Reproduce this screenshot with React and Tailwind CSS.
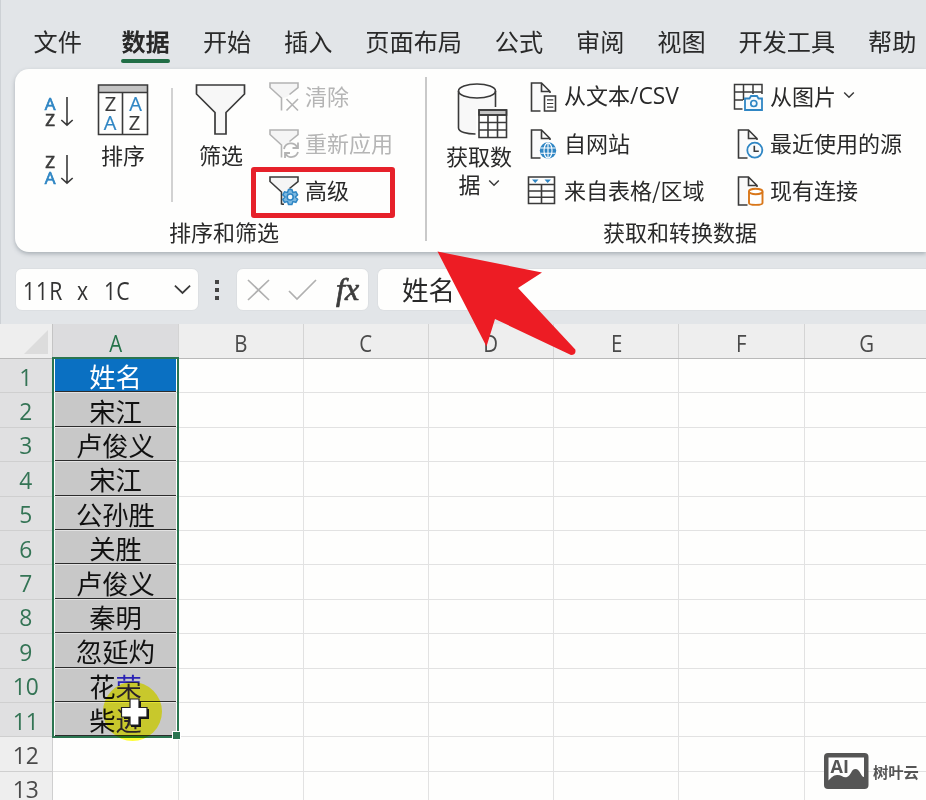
import React from 'react';

const INK = '#3a3a3a';
const BLUE = '#2f86c4';

const TABS = ['开始', '插入', '页面布局', '公式', '审阅', '视图', '开发工具', '帮助'];
const NAMES = ['姓名', '宋江', '卢俊义', '宋江', '公孙胜', '关胜', '卢俊义', '秦明', '忽延灼', '花荣', '柴进'];
const COLUMNS = ['A', 'B', 'C', 'D', 'E', 'F', 'G'];
const ROWS = Array.from({ length: 13 }, (_, i) => i + 1);

function Glyph({ x, y, size = 17, color = INK, width = 0.2, children }) {
  return (
    <text x={x} y={y} fontSize={size} fill={color} stroke={color} strokeWidth={width} textAnchor="middle" fontFamily="'Open Sans', sans-serif">
      {children}
    </text>
  );
}

function SortOrderIcon({ top, bottom }) {
  return (
    <svg className="block h-9 w-8 overflow-visible" viewBox="0 0 32 36" fill="none">
      <Glyph x="7" y="16" color={top === 'A' ? BLUE : INK} width={0.7}>{top}</Glyph>
      <Glyph x="7" y="32" color={bottom === 'A' ? BLUE : INK} width={0.7}>{bottom}</Glyph>
      <path d="M24 3V31M18.300 26L24 31.200L29.700 26" stroke={INK} strokeWidth="1.600" />
    </svg>
  );
}

function SortIcon() {
  return (
    <svg className="block h-[52px] w-[52px]" viewBox="0 0 52 52" fill="none">
      <rect x="1.500" y="1" width="49" height="7.500" fill="#c4c4c4" />
      <path d="M1.500 1H50.500V50.500H1.500ZM1.500 8.500H50.500M25.500 8.500V50.500" stroke={INK} strokeWidth="1.600" />
      <Glyph x="13.500" y="27" size={20}>Z</Glyph>
      <Glyph x="38.500" y="27" size={20} color={BLUE}>A</Glyph>
      <Glyph x="13" y="45.500" size={20} color={BLUE}>A</Glyph>
      <Glyph x="37.500" y="45.500" size={20}>Z</Glyph>
    </svg>
  );
}

function FilterIcon() {
  return (
    <svg className="block h-[52px] w-[52px]" viewBox="0 0 52 52" fill="none">
      <path d="M1.500 1H49.500V10L31 28.500V50H20V28.500L1.500 10Z" fill="#f7f7f7" stroke={INK} strokeWidth="1.700" />
    </svg>
  );
}

function SmallFunnel({ kind }) {
  const color = kind === 'advanced' ? INK : '#b3b3b3';
  return (
    <svg className="block h-8 w-8" viewBox="0 0 32 32" fill="none" stroke={color} strokeWidth="1.600">
      <path d="M1 2H29V6.500L18 16L12.500 17L1 6.500Z" fill="#f5f5f5" stroke="none" />
      <path d="M12.500 29.500V17L1 6.500V2H29V6.500L20.500 13.500" />
      {kind === 'clear' && <path d="M17.500 18L29 29.500M29 18L17.500 29.500" />}
      {kind === 'reapply' && (
        <path d="M15 21A7 7 0 0 1 28 19M29 14.500V20H23.500M29 24A7 7 0 0 1 16.500 26M16 30V25H21" strokeWidth="1.800" />
      )}
      {kind === 'advanced' && (
        <>
          <path d="M12.500 29.200H15" />
          <path d="M19.500 14.500h3.400l1 3 3-.7 1.700 3-2.200 2.200 2.200 2.300-1.700 3-3-.7-1 3h-3.400l-1-3-3 .7-1.700-3 2.200-2.300-2.200-2.200 1.700-3 3 .7z" fill="#7fb9e0" stroke={BLUE} strokeWidth="1.500" />
          <circle cx="21.200" cy="22" r="3" fill="#f4f9fd" stroke={BLUE} />
        </>
      )}
    </svg>
  );
}

function DatabaseIcon() {
  return (
    <svg className="ml-2 block h-[56px] w-[52px]" viewBox="0 0 52 56" fill="none" stroke={INK} strokeWidth="1.600">
      <path d="M1.500 8V45C1.500 49 11 51 19 51V27H38.500V8" fill="#f8f8f8" stroke="none" />
      <ellipse cx="20" cy="8" rx="18.500" ry="7" fill="#fdfdfd" />
      <path d="M38.500 8V24M1.500 8V45C1.500 49 10 51 18.500 51" />
      <rect x="22" y="27" width="27.500" height="5" fill="#c4c4c4" />
      <path d="M22 27H49.500V54.500H22ZM22 32H49.500M22 39.500H49.500M22 47H49.500M31 32V54.500M40.500 32V54.500" />
    </svg>
  );
}

function PageIcon({ kind }) {
  return (
    <svg className="block h-8 w-8" viewBox="0 0 32 32" fill="none" stroke={INK} strokeWidth="1.600">
      <path d="M5.500 2H15.500L23.500 10V13H14.500V29.500H5.500Z" fill="#fafafa" stroke="none" />
      <path d="M14.500 30H5.500V2H15.500L24 10.500V12M15.500 2V10.500H24" />
      {kind === 'text' && (
        <>
          <path d="M18.500 15H29.500V30H18.500Z" fill="#fff" />
          <path d="M21 18.800H27.300M21 22.500H27.300M21 26.200H27.300" strokeWidth="1.200" />
        </>
      )}
      {kind === 'web' && (
        <>
          <circle cx="22" cy="22.500" r="8.200" fill={BLUE} stroke="none" />
          <path d="M14.500 20H29.500M14.500 25.300H29.500M22 15V30" stroke="#fff" strokeWidth="1.100" />
          <ellipse cx="22" cy="22.500" rx="4" ry="7.600" stroke="#fff" strokeWidth="1.100" />
        </>
      )}
      {kind === 'recent' && (
        <>
          <circle cx="21.800" cy="22.200" r="7.500" fill="#f8fbfd" stroke={BLUE} strokeWidth="1.800" />
          <path d="M21.300 17.700V23.200H25.800" />
        </>
      )}
      {kind === 'connection' && (
        <g stroke="#d9771a" strokeWidth="1.900">
          <path d="M16 16.500V28C16 30.500 29.500 30.500 29.500 28V16.500" fill="#fff" />
          <ellipse cx="22.700" cy="16.500" rx="6.800" ry="2.800" fill="#fff" />
        </g>
      )}
    </svg>
  );
}

function TableRangeIcon() {
  return (
    <svg className="block h-8 w-8" viewBox="0 0 32 32" fill="none" stroke={INK} strokeWidth="1.600">
      <path d="M2.500 2H28.500V28.500H2.500ZM2.500 9.500H28.500M2.500 16H28.500M2.500 22.300H28.500M15.500 9.500V28.500" />
      <path d="M6 4.500H12.500L9.200 8ZM18.500 4.500H25L21.700 8Z" fill={BLUE} stroke="none" />
    </svg>
  );
}

function PictureTableIcon() {
  return (
    <svg className="block h-8 w-8" viewBox="0 0 32 32" fill="none" stroke={INK} strokeWidth="1.500">
      <path d="M9.500 28H1.500V3.500H29V13M1.500 11H29M1.500 19H10M10.500 3.500V19M20 3.500V13" />
      <path d="M12 17.500H16.500L18 15H24L25.500 17.500H29V29H12Z" fill="#f6fafd" stroke={BLUE} strokeWidth="1.800" />
      <circle cx="20.800" cy="22.500" r="3" stroke={BLUE} strokeWidth="1.700" />
    </svg>
  );
}

function Chevron({ className, weight = '1.500' }) {
  return (
    <svg className={className} viewBox="0 0 12 8" fill="none">
      <path d="M1.200 1.500L6 6.200L10.800 1.500" stroke={INK} strokeWidth={weight} />
    </svg>
  );
}

function Command({ icon, label, muted, gap = 'gap-1' }) {
  return (
    <div className={`flex h-[47px] items-center ${gap} ${muted ? 'text-[#b5b5b5]' : ''}`}>
      {icon}
      <span className="-mt-[3px]">{label}</span>
    </div>
  );
}

function TabBar() {
  return (
    <nav className="flex h-[69px] items-start pl-[33.500px] pt-[23px] text-[24.200px] leading-9 whitespace-nowrap">
      <span className="mr-[39.500px]">文件</span>
      <span className="mr-[32.500px] flex flex-col font-bold leading-9">
        数据
        <i className="h-1 w-[49px] rounded-full bg-[#216e46]" />
      </span>
      <div className="flex gap-[32.800px]">
        {TABS.map((tab) => <span key={tab}>{tab}</span>)}
      </div>
    </nav>
  );
}

function Ribbon() {
  return (
    <section className="ml-[15px] flex h-[183px] rounded-l-[14px] bg-[#fefefd] text-[22px] leading-7 whitespace-nowrap shadow-[0_2px_4px_rgba(100,110,120,0.45)]">
      <div className="flex w-[410px] shrink-0 flex-col">
        <div className="flex h-[145px]">
          <div className="flex w-[82px] flex-col gap-[22px] pl-7 pt-[25px]">
            <SortOrderIcon top="A" bottom="Z" />
            <SortOrderIcon top="Z" bottom="A" />
          </div>
          <div className="flex w-[52px] flex-col items-center gap-1 pt-[15px]">
            <SortIcon />
            <span>排序</span>
          </div>
          <div className="ml-[22px] mt-[19px] h-[114px] w-[2px] bg-[#d2d2d2]" />
          <div className="ml-[22px] flex w-[52px] flex-col items-center gap-1 pt-[15px]">
            <FilterIcon />
            <span>筛选</span>
          </div>
          <div className="ml-[22px] pt-1">
            <Command icon={<SmallFunnel kind="clear" />} label="清除" muted />
            <Command icon={<SmallFunnel kind="reapply" />} label="重新应用" muted />
            <div className="relative">
              <Command icon={<SmallFunnel kind="advanced" />} label="高级" />
              <div className="absolute -left-[18px] top-0 h-[51px] w-[144px] rounded-[3px] border-[5px] border-[#e6212a]" />
            </div>
          </div>
        </div>
        <div className="pl-[8px] pt-[3px] text-center">排序和筛选</div>
      </div>
      <div className="mt-2 h-[164px] w-[2px] shrink-0 bg-[#c9c9c9]" />
      <div className="flex flex-1 flex-col">
        <div className="flex h-[145px]">
          <div className="ml-[19px] flex w-[66px] flex-col items-center pt-[14px]">
            <DatabaseIcon />
            <span className="mt-[2px]">获取数</span>
            <span className="flex items-center gap-[7px]">据<Chevron className="h-[8px] w-[12px]" /></span>
          </div>
          <div className="ml-[14px] w-[207px] pt-1">
            <Command icon={<PageIcon kind="text" />} label={<span>从文本<span className="font-['Open_Sans',sans-serif] text-[22.800px]">/CSV</span></span>} gap="gap-[6px]" />
            <Command icon={<PageIcon kind="web" />} label="自网站" gap="gap-[6px]" />
            <Command icon={<TableRangeIcon />} label="来自表格/区域" gap="gap-[6px]" />
          </div>
          <div className="pt-1">
            <Command icon={<PictureTableIcon />} label={<span className="flex items-center gap-[7px]">从图片<Chevron className="h-[8px] w-[12px]" /></span>} gap="gap-[5px]" />
            <Command icon={<PageIcon kind="recent" />} label="最近使用的源" gap="gap-[5px]" />
            <Command icon={<PageIcon kind="connection" />} label="现有连接" gap="gap-[5px]" />
          </div>
        </div>
        <div className="pl-[7px] pt-[3px] text-center">获取和转换数据</div>
      </div>
    </section>
  );
}

function FormulaBar() {
  return (
    <section className="flex h-[72px] items-center pl-[15px] pt-[3px]">
      <div className="flex h-[43px] w-[184px] items-center justify-between rounded-[7px] border border-[#dcdfe2] bg-[#fefefd] pl-[6px] pr-[6px]">
        <span className="flex font-['Open_Sans',sans-serif] text-[25px] leading-8 font-medium text-[#333]">
          {'11R x 1C'.split('').map((char, i) => (
            <span key={i} className="flex w-[13.500px] justify-center"><span className="inline-block scale-x-[0.85]">{char}</span></span>
          ))}
        </span>
        <Chevron className="h-[13px] w-[19px]" weight="1.100" />
      </div>
      <div className="ml-4 flex w-[5px] flex-col gap-1">
        {[0, 1, 2].map((dot) => <i key={dot} className="size-[4px] bg-[#444]" />)}
      </div>
      <div className="ml-4 flex h-[43px] w-[133px] items-center rounded-[7px] border border-[#dcdfe2] bg-[#fefefd] pl-[10px]">
        <svg className="h-[24px] w-[72px]" viewBox="0 0 72 24" fill="none" stroke="#b0b0b0" strokeWidth="1.700">
          <path d="M1 2L22 22M22 2L1 22M42 13L50 21L69 2" />
        </svg>
        <span className="ml-[17px] -mt-[2px] font-['Liberation_Serif',serif] text-[32px] leading-9 italic text-[#3c3c3c] [-webkit-text-stroke:0.7px_#3c3c3c]">fx</span>
      </div>
      <div className="ml-2 flex h-[43px] flex-1 items-center rounded-l-[7px] border border-r-0 border-[#dcdfe2] bg-[#fefefd] pb-[2px] pl-6 text-[26.500px] leading-8">姓名</div>
    </section>
  );
}

function BlueTail({ name }) {
  return (
    <>
      {name.slice(0, 1)}
      <span className="text-[#2a22b4]">{name.slice(1)}</span>
    </>
  );
}

function NameCell({ row }) {
  const name = NAMES[row - 1];
  if (!name) return null;
  const tone = row === 1 ? 'bg-[#0a70c2] text-white' : 'bg-[#c8c8c8] text-[#111]';
  return (
    <div className={`mx-[2px] flex h-full items-center justify-center border-b-[1.500px] border-[#2c2c2c] pt-[2px] text-[26.300px] leading-8 ${tone}`}>
      <span>{row >= 10 ? <BlueTail name={name} /> : name}</span>
    </div>
  );
}

function Sheet() {
  return (
    <section className="relative h-[476px] overflow-hidden bg-[#fefefd]">
      <div className="flex h-[35px] border-b border-[#b9b9b9] bg-[#eeeeee] font-['Open_Sans',sans-serif] text-[24px] font-medium text-[#4a4a4a]">
        <div className="flex w-[53.400px] shrink-0 items-end justify-end border-r border-[#c4c4c4] pb-1 pr-1">
          <svg className="h-[24px] w-[24px]" viewBox="0 0 24 24"><path d="M24 0V24H0Z" fill="#dcdcdc" /></svg>
        </div>
        {COLUMNS.map((col) => (
          <div key={col} className={`flex w-[125.200px] shrink-0 items-center justify-center border-r border-[#d4d4d4] pt-[4px] ${col === 'A' ? 'bg-[#dcdcde] text-[#25734a]' : ''}`}>
            <span className="inline-block scale-x-[0.85]">{col}</span>
          </div>
        ))}
      </div>
      {ROWS.map((row) => (
        <div key={row} className="flex h-[34.400px]">
          <div className={`flex w-[53.400px] shrink-0 items-center justify-center border-r border-b border-[#cfcfcf] pt-[2px] font-['Open_Sans',sans-serif] text-[24px] leading-8 ${row <= 11 ? 'bg-[#e0e0e1] text-[#347455]' : 'bg-[#eeeeee] text-[#4a4a4a]'}`}><span className="inline-block scale-x-95">{row}</span></div>
          {COLUMNS.map((col) => (
            <div key={col} className="w-[125.200px] shrink-0 border-r border-b border-[#e2e2e2]">
              {col === 'A' && <NameCell row={row} />}
            </div>
          ))}
        </div>
      ))}
      <div className="absolute left-[52px] top-[33px] h-[381px] w-[127px] border-2 border-[#2a7550]" />
      <div className="absolute left-[172px] top-[407px] h-[9px] w-[9px] border border-white bg-[#2a7550]" />
      <div className="absolute left-[103px] top-[358px] size-[59px] rounded-full bg-[#ffff38] mix-blend-multiply" />
      <svg className="absolute left-[119px] top-[373px] h-[32px] w-[32px]" viewBox="0 0 32 32">
        <path d="M12 4H22V12H30V22H22V30H12V22H5V12H12Z" fill="#151515" />
        <path d="M11 2H20V10.500H28V20H20V28H11V20H2.500V10.500H11Z" fill="#fff" stroke="#222" strokeWidth="1.200" />
      </svg>
    </section>
  );
}

function Watermark() {
  return (
    <div className="absolute left-[824px] top-[753px] flex items-center gap-1 text-[#555]">
      <svg className="h-9 w-[45px]" viewBox="0 0 45 36">
        <rect width="44.500" height="36" rx="4" fill="#555" />
        <path d="M4.500 4.500H40V24C37 24 36 16 31.500 16C27 16 27 23 23 24C19 25 17 21.500 13 22C9 22.500 8 24 4.500 27.500Z" fill="#fefefe" />
        <text x="6.500" y="20" fontSize="18" fontWeight="700" fill="#555" fontFamily="'Open Sans', sans-serif">AI</text>
      </svg>
      <span className="text-[15.300px] leading-6 font-bold whitespace-nowrap">树叶云</span>
    </div>
  );
}

export default function App() {
  return (
    <main className="relative h-[800px] w-[926px] overflow-hidden bg-[#e2e5e8] font-['Noto_Sans_CJK_SC',sans-serif] text-[#292929] shadow-[inset_1px_0_0_#cdd1d5]">
      <TabBar />
      <Ribbon />
      <FormulaBar />
      <Sheet />
      <svg className="absolute left-[430px] top-[245px] h-[116px] w-[152px]" viewBox="430 245 152 116">
        <path d="M437.500 251.500L542 272.500L518 288L575.300 349.500Q576.500 355 571 355L495 319L486.500 346.500Z" fill="#ed1c24" />
      </svg>
      <Watermark />
    </main>
  );
}
